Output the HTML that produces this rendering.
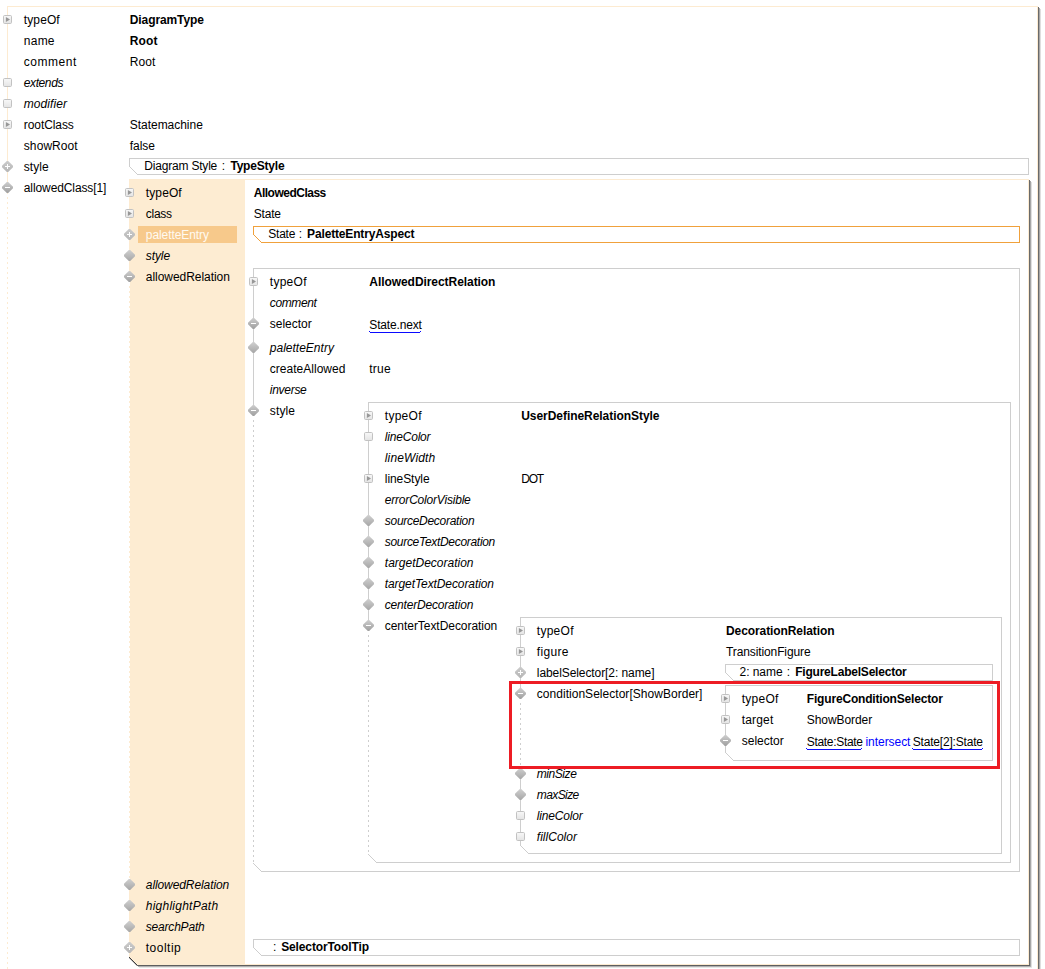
<!DOCTYPE html>
<html><head><meta charset="utf-8"><title>DiagramType Root</title>
<style>
html,body{margin:0;padding:0;background:#fff}
body{width:1045px;height:969px;position:relative;overflow:hidden;font-family:"Liberation Sans",sans-serif;font-size:12px;color:#000}
.a{position:absolute}
.t{position:absolute;white-space:pre;line-height:16px;height:16px}
.b{font-weight:bold}
.i{font-style:italic}
.g{background:#cecece}
.p{background:#fde8cb}
svg{position:absolute;overflow:visible}
.u{position:absolute;height:1px;background:#0a0aff}
</style></head><body>

<svg style="left:0;top:0" width="1045" height="969" viewBox="0 0 1045 969">
<polygon points="130,179 245,179 245,965 137.5,965 130,957.5" fill="#fdecd2"/>
</svg>
<div class="a" style="left:129px;top:179px;width:900px;height:1px;background:#fdebd1;"></div>
<div class="a" style="left:1028px;top:179px;width:1px;height:786px;background:#fdebd1;"></div>
<div class="a" style="left:1029px;top:180px;width:1px;height:787px;background:#6a6a6a;"></div>
<div class="a" style="left:1030px;top:181px;width:1px;height:786px;background:#a6a6a6;"></div>
<div class="a" style="left:1031px;top:182px;width:1px;height:785px;background:#dedede;"></div>
<div class="a" style="left:137px;top:965px;width:893px;height:1px;background:#5e5e5e;"></div>
<div class="a" style="left:138px;top:966px;width:893px;height:1px;background:#b0b0b0;"></div>
<div class="a" style="left:139px;top:967px;width:893px;height:1px;background:#e6e6e6;"></div>
<div class="a" style="left:245px;top:964px;width:784px;height:1px;background:#fdebd1;"></div>
<div class="a" style="left:7px;top:193px;width:1px;height:1px;background:#fdebd1;"></div>
<div class="a" style="left:129px;top:179px;width:1px;height:98px;background:#fdebd1;"></div>
<div class="a" style="left:129px;top:286px;width:1px;height:594px;background:repeating-linear-gradient(to bottom,#fdebd1 0,#fdebd1 2px,transparent 2px,transparent 5px)"></div>
<div class="a" style="left:129px;top:884px;width:1px;height:73px;background:#fdebd1;"></div>
<div class="a" style="left:129px;top:957px;width:1px;height:1px;background:#3c3c3c;"></div>
<div class="a" style="left:129px;top:958px;width:1px;height:1px;background:rgba(60,60,60,0.35);"></div>
<div class="a" style="left:130px;top:958px;width:1px;height:1px;background:#3c3c3c;"></div>
<div class="a" style="left:130px;top:959px;width:1px;height:1px;background:rgba(60,60,60,0.35);"></div>
<div class="a" style="left:131px;top:959px;width:1px;height:1px;background:#3c3c3c;"></div>
<div class="a" style="left:131px;top:960px;width:1px;height:1px;background:rgba(60,60,60,0.35);"></div>
<div class="a" style="left:132px;top:960px;width:1px;height:1px;background:#3c3c3c;"></div>
<div class="a" style="left:132px;top:961px;width:1px;height:1px;background:rgba(60,60,60,0.35);"></div>
<div class="a" style="left:133px;top:961px;width:1px;height:1px;background:#3c3c3c;"></div>
<div class="a" style="left:133px;top:962px;width:1px;height:1px;background:rgba(60,60,60,0.35);"></div>
<div class="a" style="left:134px;top:962px;width:1px;height:1px;background:#3c3c3c;"></div>
<div class="a" style="left:134px;top:963px;width:1px;height:1px;background:rgba(60,60,60,0.35);"></div>
<div class="a" style="left:135px;top:963px;width:1px;height:1px;background:#3c3c3c;"></div>
<div class="a" style="left:135px;top:964px;width:1px;height:1px;background:rgba(60,60,60,0.35);"></div>
<div class="a" style="left:136px;top:964px;width:1px;height:1px;background:#3c3c3c;"></div>
<div class="a" style="left:136px;top:965px;width:1px;height:1px;background:rgba(60,60,60,0.35);"></div>
<div class="a" style="left:7px;top:6px;width:1031px;height:1px;background:#fdebd1;"></div>
<div class="a" style="left:7px;top:6px;width:1px;height:182px;background:#fdebd1;"></div>
<div class="a" style="left:7px;top:197px;width:1px;height:773px;background:repeating-linear-gradient(to bottom,#fdebd1 0,#fdebd1 2px,transparent 2px,transparent 5px)"></div>
<div class="a" style="left:1037px;top:6px;width:1px;height:963px;background:#fdebd1;"></div>
<div class="a" style="left:1038px;top:7px;width:1px;height:962px;background:#6a6a6a;"></div>
<div class="a" style="left:1039px;top:8px;width:1px;height:961px;background:#a6a6a6;"></div>
<div class="a" style="left:1040px;top:9px;width:1px;height:960px;background:#dedede;"></div>
<div class="a" style="left:138px;top:226px;width:99px;height:17px;background:#f7c98b;"></div>
<div class="a" style="left:253px;top:268px;width:767px;height:1px;background:#cecece;"></div>
<div class="a" style="left:1019px;top:268px;width:1px;height:604px;background:#cecece;"></div>
<div class="a" style="left:261px;top:871px;width:759px;height:1px;background:#cecece;"></div>
<div class="a" style="left:253px;top:268px;width:1px;height:143px;background:#cecece;"></div>
<div class="a" style="left:253px;top:420px;width:1px;height:443px;background:repeating-linear-gradient(to bottom,#cecece 0,#cecece 2px,transparent 2px,transparent 5px)"></div>
<div class="a" style="left:253px;top:863px;width:1px;height:1px;background:#cecece;"></div>
<div class="a" style="left:254px;top:864px;width:1px;height:1px;background:#cecece;"></div>
<div class="a" style="left:255px;top:865px;width:1px;height:1px;background:#cecece;"></div>
<div class="a" style="left:256px;top:866px;width:1px;height:1px;background:#cecece;"></div>
<div class="a" style="left:257px;top:867px;width:1px;height:1px;background:#cecece;"></div>
<div class="a" style="left:258px;top:868px;width:1px;height:1px;background:#cecece;"></div>
<div class="a" style="left:259px;top:869px;width:1px;height:1px;background:#cecece;"></div>
<div class="a" style="left:260px;top:870px;width:1px;height:1px;background:#cecece;"></div>
<div class="a" style="left:368px;top:402px;width:643px;height:1px;background:#cecece;"></div>
<div class="a" style="left:1010px;top:402px;width:1px;height:461px;background:#cecece;"></div>
<div class="a" style="left:376px;top:862px;width:635px;height:1px;background:#cecece;"></div>
<div class="a" style="left:368px;top:402px;width:1px;height:224px;background:#cecece;"></div>
<div class="a" style="left:368px;top:635px;width:1px;height:219px;background:repeating-linear-gradient(to bottom,#cecece 0,#cecece 2px,transparent 2px,transparent 5px)"></div>
<div class="a" style="left:368px;top:854px;width:1px;height:1px;background:#cecece;"></div>
<div class="a" style="left:369px;top:855px;width:1px;height:1px;background:#cecece;"></div>
<div class="a" style="left:370px;top:856px;width:1px;height:1px;background:#cecece;"></div>
<div class="a" style="left:371px;top:857px;width:1px;height:1px;background:#cecece;"></div>
<div class="a" style="left:372px;top:858px;width:1px;height:1px;background:#cecece;"></div>
<div class="a" style="left:373px;top:859px;width:1px;height:1px;background:#cecece;"></div>
<div class="a" style="left:374px;top:860px;width:1px;height:1px;background:#cecece;"></div>
<div class="a" style="left:375px;top:861px;width:1px;height:1px;background:#cecece;"></div>
<div class="a" style="left:520px;top:617px;width:482px;height:1px;background:#cecece;"></div>
<div class="a" style="left:1001px;top:617px;width:1px;height:237px;background:#cecece;"></div>
<div class="a" style="left:528px;top:853px;width:474px;height:1px;background:#cecece;"></div>
<div class="a" style="left:520px;top:617px;width:1px;height:77px;background:#cecece;"></div>
<div class="a" style="left:520px;top:703px;width:1px;height:65px;background:repeating-linear-gradient(to bottom,#cecece 0,#cecece 2px,transparent 2px,transparent 5px)"></div>
<div class="a" style="left:520px;top:773px;width:1px;height:72px;background:#cecece;"></div>
<div class="a" style="left:520px;top:845px;width:1px;height:1px;background:#cecece;"></div>
<div class="a" style="left:521px;top:846px;width:1px;height:1px;background:#cecece;"></div>
<div class="a" style="left:522px;top:847px;width:1px;height:1px;background:#cecece;"></div>
<div class="a" style="left:523px;top:848px;width:1px;height:1px;background:#cecece;"></div>
<div class="a" style="left:524px;top:849px;width:1px;height:1px;background:#cecece;"></div>
<div class="a" style="left:525px;top:850px;width:1px;height:1px;background:#cecece;"></div>
<div class="a" style="left:526px;top:851px;width:1px;height:1px;background:#cecece;"></div>
<div class="a" style="left:527px;top:852px;width:1px;height:1px;background:#cecece;"></div>
<div class="a" style="left:725px;top:685px;width:268px;height:1px;background:#cecece;"></div>
<div class="a" style="left:992px;top:685px;width:1px;height:76px;background:#cecece;"></div>
<div class="a" style="left:733px;top:760px;width:260px;height:1px;background:#cecece;"></div>
<div class="a" style="left:725px;top:685px;width:1px;height:67px;background:#cecece;"></div>
<div class="a" style="left:725px;top:752px;width:1px;height:1px;background:#cecece;"></div>
<div class="a" style="left:726px;top:753px;width:1px;height:1px;background:#cecece;"></div>
<div class="a" style="left:727px;top:754px;width:1px;height:1px;background:#cecece;"></div>
<div class="a" style="left:728px;top:755px;width:1px;height:1px;background:#cecece;"></div>
<div class="a" style="left:729px;top:756px;width:1px;height:1px;background:#cecece;"></div>
<div class="a" style="left:730px;top:757px;width:1px;height:1px;background:#cecece;"></div>
<div class="a" style="left:731px;top:758px;width:1px;height:1px;background:#cecece;"></div>
<div class="a" style="left:732px;top:759px;width:1px;height:1px;background:#cecece;"></div>
<div class="a" style="left:129px;top:158px;width:900px;height:1px;background:#cecece;"></div>
<div class="a" style="left:1028px;top:158px;width:1px;height:17px;background:#cecece;"></div>
<div class="a" style="left:137px;top:174px;width:892px;height:1px;background:#cecece;"></div>
<div class="a" style="left:129px;top:158px;width:1px;height:9px;background:#cecece;"></div>
<div class="a" style="left:129px;top:166px;width:1px;height:1px;background:#cecece;"></div>
<div class="a" style="left:130px;top:167px;width:1px;height:1px;background:#cecece;"></div>
<div class="a" style="left:131px;top:168px;width:1px;height:1px;background:#cecece;"></div>
<div class="a" style="left:132px;top:169px;width:1px;height:1px;background:#cecece;"></div>
<div class="a" style="left:133px;top:170px;width:1px;height:1px;background:#cecece;"></div>
<div class="a" style="left:134px;top:171px;width:1px;height:1px;background:#cecece;"></div>
<div class="a" style="left:135px;top:172px;width:1px;height:1px;background:#cecece;"></div>
<div class="a" style="left:136px;top:173px;width:1px;height:1px;background:#cecece;"></div>
<div class="a" style="left:253px;top:226px;width:767px;height:1px;background:#f0a13c;"></div>
<div class="a" style="left:1019px;top:226px;width:1px;height:17px;background:#f0a13c;"></div>
<div class="a" style="left:261px;top:242px;width:759px;height:1px;background:#f0a13c;"></div>
<div class="a" style="left:253px;top:226px;width:1px;height:9px;background:#f0a13c;"></div>
<div class="a" style="left:253px;top:234px;width:1px;height:1px;background:#f0a13c;"></div>
<div class="a" style="left:254px;top:235px;width:1px;height:1px;background:#f0a13c;"></div>
<div class="a" style="left:255px;top:236px;width:1px;height:1px;background:#f0a13c;"></div>
<div class="a" style="left:256px;top:237px;width:1px;height:1px;background:#f0a13c;"></div>
<div class="a" style="left:257px;top:238px;width:1px;height:1px;background:#f0a13c;"></div>
<div class="a" style="left:258px;top:239px;width:1px;height:1px;background:#f0a13c;"></div>
<div class="a" style="left:259px;top:240px;width:1px;height:1px;background:#f0a13c;"></div>
<div class="a" style="left:260px;top:241px;width:1px;height:1px;background:#f0a13c;"></div>
<div class="a" style="left:253px;top:939px;width:767px;height:1px;background:#cecece;"></div>
<div class="a" style="left:1019px;top:939px;width:1px;height:17px;background:#cecece;"></div>
<div class="a" style="left:261px;top:955px;width:759px;height:1px;background:#cecece;"></div>
<div class="a" style="left:253px;top:939px;width:1px;height:9px;background:#cecece;"></div>
<div class="a" style="left:253px;top:947px;width:1px;height:1px;background:#cecece;"></div>
<div class="a" style="left:254px;top:948px;width:1px;height:1px;background:#cecece;"></div>
<div class="a" style="left:255px;top:949px;width:1px;height:1px;background:#cecece;"></div>
<div class="a" style="left:256px;top:950px;width:1px;height:1px;background:#cecece;"></div>
<div class="a" style="left:257px;top:951px;width:1px;height:1px;background:#cecece;"></div>
<div class="a" style="left:258px;top:952px;width:1px;height:1px;background:#cecece;"></div>
<div class="a" style="left:259px;top:953px;width:1px;height:1px;background:#cecece;"></div>
<div class="a" style="left:260px;top:954px;width:1px;height:1px;background:#cecece;"></div>
<div class="a" style="left:725px;top:664px;width:268px;height:1px;background:#cecece;"></div>
<div class="a" style="left:992px;top:664px;width:1px;height:17px;background:#cecece;"></div>
<div class="a" style="left:733px;top:680px;width:260px;height:1px;background:#cecece;"></div>
<div class="a" style="left:725px;top:664px;width:1px;height:9px;background:#cecece;"></div>
<div class="a" style="left:725px;top:672px;width:1px;height:1px;background:#cecece;"></div>
<div class="a" style="left:726px;top:673px;width:1px;height:1px;background:#cecece;"></div>
<div class="a" style="left:727px;top:674px;width:1px;height:1px;background:#cecece;"></div>
<div class="a" style="left:728px;top:675px;width:1px;height:1px;background:#cecece;"></div>
<div class="a" style="left:729px;top:676px;width:1px;height:1px;background:#cecece;"></div>
<div class="a" style="left:730px;top:677px;width:1px;height:1px;background:#cecece;"></div>
<div class="a" style="left:731px;top:678px;width:1px;height:1px;background:#cecece;"></div>
<div class="a" style="left:732px;top:679px;width:1px;height:1px;background:#cecece;"></div>
<svg style="left:3px;top:15px" width="9" height="9" viewBox="0 0 9 9"><defs><linearGradient id="gb7_19" x1="0" y1="0" x2="0" y2="1"><stop offset="0" stop-color="#f8f8f8"/><stop offset="1" stop-color="#e4e4e4"/></linearGradient></defs><rect x="0.5" y="0.5" width="8" height="8" rx="1.1" ry="1.1" fill="url(#gb7_19)" stroke="#c2c2c2"/><path d="M2.9 1.9 L2.9 7.1 L7 4.5 Z" fill="#979797"/></svg>
<svg style="left:3px;top:78px" width="9" height="9" viewBox="0 0 9 9"><defs><linearGradient id="gb7_82" x1="0" y1="0" x2="0" y2="1"><stop offset="0" stop-color="#f8f8f8"/><stop offset="1" stop-color="#e4e4e4"/></linearGradient></defs><rect x="0.5" y="0.5" width="8" height="8" rx="1.1" ry="1.1" fill="url(#gb7_82)" stroke="#c2c2c2"/></svg>
<svg style="left:3px;top:99px" width="9" height="9" viewBox="0 0 9 9"><defs><linearGradient id="gb7_103" x1="0" y1="0" x2="0" y2="1"><stop offset="0" stop-color="#f8f8f8"/><stop offset="1" stop-color="#e4e4e4"/></linearGradient></defs><rect x="0.5" y="0.5" width="8" height="8" rx="1.1" ry="1.1" fill="url(#gb7_103)" stroke="#c2c2c2"/></svg>
<svg style="left:3px;top:120px" width="9" height="9" viewBox="0 0 9 9"><defs><linearGradient id="gb7_124" x1="0" y1="0" x2="0" y2="1"><stop offset="0" stop-color="#f8f8f8"/><stop offset="1" stop-color="#e4e4e4"/></linearGradient></defs><rect x="0.5" y="0.5" width="8" height="8" rx="1.1" ry="1.1" fill="url(#gb7_124)" stroke="#c2c2c2"/><path d="M2.9 1.9 L2.9 7.1 L7 4.5 Z" fill="#979797"/></svg>
<svg style="left:2px;top:161px;overflow:hidden" width="11" height="11" viewBox="0 0 11 11"><defs><linearGradient id="gd7_166" x1="0" y1="0" x2="0" y2="1"><stop offset="0" stop-color="#cdcdcd"/><stop offset="1" stop-color="#b4b4b4"/></linearGradient></defs><path d="M5.5 -0.7 L11.7 5.5 L5.5 11.7 L-0.7 5.5 Z" fill="url(#gd7_166)"/><rect x="3" y="5" width="5" height="1" fill="#fff"/><rect x="5" y="3" width="1" height="5" fill="#fff"/></svg>
<svg style="left:2px;top:182px;overflow:hidden" width="11" height="11" viewBox="0 0 11 11"><defs><linearGradient id="gd7_187" x1="0" y1="0" x2="0" y2="1"><stop offset="0" stop-color="#d0d0d0"/><stop offset="1" stop-color="#9c9c9c"/></linearGradient></defs><path d="M5.5 -0.7 L11.7 5.5 L5.5 11.7 L-0.7 5.5 Z" fill="url(#gd7_187)"/><rect x="3" y="5" width="5" height="1" fill="#fff"/></svg>
<svg style="left:125px;top:188px" width="9" height="9" viewBox="0 0 9 9"><defs><linearGradient id="gb129_192" x1="0" y1="0" x2="0" y2="1"><stop offset="0" stop-color="#f8f8f8"/><stop offset="1" stop-color="#e4e4e4"/></linearGradient></defs><rect x="0.5" y="0.5" width="8" height="8" rx="1.1" ry="1.1" fill="url(#gb129_192)" stroke="#c2c2c2"/><path d="M2.9 1.9 L2.9 7.1 L7 4.5 Z" fill="#979797"/></svg>
<svg style="left:125px;top:209px" width="9" height="9" viewBox="0 0 9 9"><defs><linearGradient id="gb129_213" x1="0" y1="0" x2="0" y2="1"><stop offset="0" stop-color="#f8f8f8"/><stop offset="1" stop-color="#e4e4e4"/></linearGradient></defs><rect x="0.5" y="0.5" width="8" height="8" rx="1.1" ry="1.1" fill="url(#gb129_213)" stroke="#c2c2c2"/><path d="M2.9 1.9 L2.9 7.1 L7 4.5 Z" fill="#979797"/></svg>
<svg style="left:124px;top:229px;overflow:hidden" width="11" height="11" viewBox="0 0 11 11"><defs><linearGradient id="gd129_234" x1="0" y1="0" x2="0" y2="1"><stop offset="0" stop-color="#cdcdcd"/><stop offset="1" stop-color="#b4b4b4"/></linearGradient></defs><path d="M5.5 -0.7 L11.7 5.5 L5.5 11.7 L-0.7 5.5 Z" fill="url(#gd129_234)"/><rect x="3" y="5" width="5" height="1" fill="#fff"/><rect x="5" y="3" width="1" height="5" fill="#fff"/></svg>
<svg style="left:124px;top:250px;overflow:hidden" width="11" height="11" viewBox="0 0 11 11"><defs><linearGradient id="gd129_255" x1="0" y1="0" x2="0" y2="1"><stop offset="0" stop-color="#d2d2d2"/><stop offset="1" stop-color="#a4a4a4"/></linearGradient></defs><path d="M5.5 -0.7 L11.7 5.5 L5.5 11.7 L-0.7 5.5 Z" fill="url(#gd129_255)"/></svg>
<svg style="left:124px;top:271px;overflow:hidden" width="11" height="11" viewBox="0 0 11 11"><defs><linearGradient id="gd129_276" x1="0" y1="0" x2="0" y2="1"><stop offset="0" stop-color="#d0d0d0"/><stop offset="1" stop-color="#9c9c9c"/></linearGradient></defs><path d="M5.5 -0.7 L11.7 5.5 L5.5 11.7 L-0.7 5.5 Z" fill="url(#gd129_276)"/><rect x="3" y="5" width="5" height="1" fill="#fff"/></svg>
<svg style="left:124px;top:879px;overflow:hidden" width="11" height="11" viewBox="0 0 11 11"><defs><linearGradient id="gd129_884" x1="0" y1="0" x2="0" y2="1"><stop offset="0" stop-color="#d2d2d2"/><stop offset="1" stop-color="#a4a4a4"/></linearGradient></defs><path d="M5.5 -0.7 L11.7 5.5 L5.5 11.7 L-0.7 5.5 Z" fill="url(#gd129_884)"/></svg>
<svg style="left:124px;top:900px;overflow:hidden" width="11" height="11" viewBox="0 0 11 11"><defs><linearGradient id="gd129_905" x1="0" y1="0" x2="0" y2="1"><stop offset="0" stop-color="#d2d2d2"/><stop offset="1" stop-color="#a4a4a4"/></linearGradient></defs><path d="M5.5 -0.7 L11.7 5.5 L5.5 11.7 L-0.7 5.5 Z" fill="url(#gd129_905)"/></svg>
<svg style="left:124px;top:921px;overflow:hidden" width="11" height="11" viewBox="0 0 11 11"><defs><linearGradient id="gd129_926" x1="0" y1="0" x2="0" y2="1"><stop offset="0" stop-color="#d2d2d2"/><stop offset="1" stop-color="#a4a4a4"/></linearGradient></defs><path d="M5.5 -0.7 L11.7 5.5 L5.5 11.7 L-0.7 5.5 Z" fill="url(#gd129_926)"/></svg>
<svg style="left:124px;top:942px;overflow:hidden" width="11" height="11" viewBox="0 0 11 11"><defs><linearGradient id="gd129_947" x1="0" y1="0" x2="0" y2="1"><stop offset="0" stop-color="#cdcdcd"/><stop offset="1" stop-color="#b4b4b4"/></linearGradient></defs><path d="M5.5 -0.7 L11.7 5.5 L5.5 11.7 L-0.7 5.5 Z" fill="url(#gd129_947)"/><rect x="3" y="5" width="5" height="1" fill="#fff"/><rect x="5" y="3" width="1" height="5" fill="#fff"/></svg>
<svg style="left:249px;top:277px" width="9" height="9" viewBox="0 0 9 9"><defs><linearGradient id="gb253_281" x1="0" y1="0" x2="0" y2="1"><stop offset="0" stop-color="#f8f8f8"/><stop offset="1" stop-color="#e4e4e4"/></linearGradient></defs><rect x="0.5" y="0.5" width="8" height="8" rx="1.1" ry="1.1" fill="url(#gb253_281)" stroke="#c2c2c2"/><path d="M2.9 1.9 L2.9 7.1 L7 4.5 Z" fill="#979797"/></svg>
<svg style="left:248px;top:318px;overflow:hidden" width="11" height="11" viewBox="0 0 11 11"><defs><linearGradient id="gd253_323" x1="0" y1="0" x2="0" y2="1"><stop offset="0" stop-color="#d0d0d0"/><stop offset="1" stop-color="#9c9c9c"/></linearGradient></defs><path d="M5.5 -0.7 L11.7 5.5 L5.5 11.7 L-0.7 5.5 Z" fill="url(#gd253_323)"/><rect x="3" y="5" width="5" height="1" fill="#fff"/></svg>
<svg style="left:248px;top:342px;overflow:hidden" width="11" height="11" viewBox="0 0 11 11"><defs><linearGradient id="gd253_347" x1="0" y1="0" x2="0" y2="1"><stop offset="0" stop-color="#d2d2d2"/><stop offset="1" stop-color="#a4a4a4"/></linearGradient></defs><path d="M5.5 -0.7 L11.7 5.5 L5.5 11.7 L-0.7 5.5 Z" fill="url(#gd253_347)"/></svg>
<svg style="left:248px;top:405px;overflow:hidden" width="11" height="11" viewBox="0 0 11 11"><defs><linearGradient id="gd253_410" x1="0" y1="0" x2="0" y2="1"><stop offset="0" stop-color="#d0d0d0"/><stop offset="1" stop-color="#9c9c9c"/></linearGradient></defs><path d="M5.5 -0.7 L11.7 5.5 L5.5 11.7 L-0.7 5.5 Z" fill="url(#gd253_410)"/><rect x="3" y="5" width="5" height="1" fill="#fff"/></svg>
<svg style="left:364px;top:411px" width="9" height="9" viewBox="0 0 9 9"><defs><linearGradient id="gb368_415" x1="0" y1="0" x2="0" y2="1"><stop offset="0" stop-color="#f8f8f8"/><stop offset="1" stop-color="#e4e4e4"/></linearGradient></defs><rect x="0.5" y="0.5" width="8" height="8" rx="1.1" ry="1.1" fill="url(#gb368_415)" stroke="#c2c2c2"/><path d="M2.9 1.9 L2.9 7.1 L7 4.5 Z" fill="#979797"/></svg>
<svg style="left:364px;top:432px" width="9" height="9" viewBox="0 0 9 9"><defs><linearGradient id="gb368_436" x1="0" y1="0" x2="0" y2="1"><stop offset="0" stop-color="#f8f8f8"/><stop offset="1" stop-color="#e4e4e4"/></linearGradient></defs><rect x="0.5" y="0.5" width="8" height="8" rx="1.1" ry="1.1" fill="url(#gb368_436)" stroke="#c2c2c2"/></svg>
<svg style="left:364px;top:474px" width="9" height="9" viewBox="0 0 9 9"><defs><linearGradient id="gb368_478" x1="0" y1="0" x2="0" y2="1"><stop offset="0" stop-color="#f8f8f8"/><stop offset="1" stop-color="#e4e4e4"/></linearGradient></defs><rect x="0.5" y="0.5" width="8" height="8" rx="1.1" ry="1.1" fill="url(#gb368_478)" stroke="#c2c2c2"/><path d="M2.9 1.9 L2.9 7.1 L7 4.5 Z" fill="#979797"/></svg>
<svg style="left:363px;top:515px;overflow:hidden" width="11" height="11" viewBox="0 0 11 11"><defs><linearGradient id="gd368_520" x1="0" y1="0" x2="0" y2="1"><stop offset="0" stop-color="#d2d2d2"/><stop offset="1" stop-color="#a4a4a4"/></linearGradient></defs><path d="M5.5 -0.7 L11.7 5.5 L5.5 11.7 L-0.7 5.5 Z" fill="url(#gd368_520)"/></svg>
<svg style="left:363px;top:536px;overflow:hidden" width="11" height="11" viewBox="0 0 11 11"><defs><linearGradient id="gd368_541" x1="0" y1="0" x2="0" y2="1"><stop offset="0" stop-color="#d2d2d2"/><stop offset="1" stop-color="#a4a4a4"/></linearGradient></defs><path d="M5.5 -0.7 L11.7 5.5 L5.5 11.7 L-0.7 5.5 Z" fill="url(#gd368_541)"/></svg>
<svg style="left:363px;top:557px;overflow:hidden" width="11" height="11" viewBox="0 0 11 11"><defs><linearGradient id="gd368_562" x1="0" y1="0" x2="0" y2="1"><stop offset="0" stop-color="#d2d2d2"/><stop offset="1" stop-color="#a4a4a4"/></linearGradient></defs><path d="M5.5 -0.7 L11.7 5.5 L5.5 11.7 L-0.7 5.5 Z" fill="url(#gd368_562)"/></svg>
<svg style="left:363px;top:578px;overflow:hidden" width="11" height="11" viewBox="0 0 11 11"><defs><linearGradient id="gd368_583" x1="0" y1="0" x2="0" y2="1"><stop offset="0" stop-color="#d2d2d2"/><stop offset="1" stop-color="#a4a4a4"/></linearGradient></defs><path d="M5.5 -0.7 L11.7 5.5 L5.5 11.7 L-0.7 5.5 Z" fill="url(#gd368_583)"/></svg>
<svg style="left:363px;top:599px;overflow:hidden" width="11" height="11" viewBox="0 0 11 11"><defs><linearGradient id="gd368_604" x1="0" y1="0" x2="0" y2="1"><stop offset="0" stop-color="#d2d2d2"/><stop offset="1" stop-color="#a4a4a4"/></linearGradient></defs><path d="M5.5 -0.7 L11.7 5.5 L5.5 11.7 L-0.7 5.5 Z" fill="url(#gd368_604)"/></svg>
<svg style="left:363px;top:620px;overflow:hidden" width="11" height="11" viewBox="0 0 11 11"><defs><linearGradient id="gd368_625" x1="0" y1="0" x2="0" y2="1"><stop offset="0" stop-color="#d0d0d0"/><stop offset="1" stop-color="#9c9c9c"/></linearGradient></defs><path d="M5.5 -0.7 L11.7 5.5 L5.5 11.7 L-0.7 5.5 Z" fill="url(#gd368_625)"/><rect x="3" y="5" width="5" height="1" fill="#fff"/></svg>
<svg style="left:516px;top:626px" width="9" height="9" viewBox="0 0 9 9"><defs><linearGradient id="gb520_630" x1="0" y1="0" x2="0" y2="1"><stop offset="0" stop-color="#f8f8f8"/><stop offset="1" stop-color="#e4e4e4"/></linearGradient></defs><rect x="0.5" y="0.5" width="8" height="8" rx="1.1" ry="1.1" fill="url(#gb520_630)" stroke="#c2c2c2"/><path d="M2.9 1.9 L2.9 7.1 L7 4.5 Z" fill="#979797"/></svg>
<svg style="left:516px;top:647px" width="9" height="9" viewBox="0 0 9 9"><defs><linearGradient id="gb520_651" x1="0" y1="0" x2="0" y2="1"><stop offset="0" stop-color="#f8f8f8"/><stop offset="1" stop-color="#e4e4e4"/></linearGradient></defs><rect x="0.5" y="0.5" width="8" height="8" rx="1.1" ry="1.1" fill="url(#gb520_651)" stroke="#c2c2c2"/><path d="M2.9 1.9 L2.9 7.1 L7 4.5 Z" fill="#979797"/></svg>
<svg style="left:515px;top:667px;overflow:hidden" width="11" height="11" viewBox="0 0 11 11"><defs><linearGradient id="gd520_672" x1="0" y1="0" x2="0" y2="1"><stop offset="0" stop-color="#cdcdcd"/><stop offset="1" stop-color="#b4b4b4"/></linearGradient></defs><path d="M5.5 -0.7 L11.7 5.5 L5.5 11.7 L-0.7 5.5 Z" fill="url(#gd520_672)"/><rect x="3" y="5" width="5" height="1" fill="#fff"/><rect x="5" y="3" width="1" height="5" fill="#fff"/></svg>
<svg style="left:515px;top:688px;overflow:hidden" width="11" height="11" viewBox="0 0 11 11"><defs><linearGradient id="gd520_693" x1="0" y1="0" x2="0" y2="1"><stop offset="0" stop-color="#d0d0d0"/><stop offset="1" stop-color="#9c9c9c"/></linearGradient></defs><path d="M5.5 -0.7 L11.7 5.5 L5.5 11.7 L-0.7 5.5 Z" fill="url(#gd520_693)"/><rect x="3" y="5" width="5" height="1" fill="#fff"/></svg>
<svg style="left:515px;top:768px;overflow:hidden" width="11" height="11" viewBox="0 0 11 11"><defs><linearGradient id="gd520_773" x1="0" y1="0" x2="0" y2="1"><stop offset="0" stop-color="#d2d2d2"/><stop offset="1" stop-color="#a4a4a4"/></linearGradient></defs><path d="M5.5 -0.7 L11.7 5.5 L5.5 11.7 L-0.7 5.5 Z" fill="url(#gd520_773)"/></svg>
<svg style="left:515px;top:789px;overflow:hidden" width="11" height="11" viewBox="0 0 11 11"><defs><linearGradient id="gd520_794" x1="0" y1="0" x2="0" y2="1"><stop offset="0" stop-color="#d2d2d2"/><stop offset="1" stop-color="#a4a4a4"/></linearGradient></defs><path d="M5.5 -0.7 L11.7 5.5 L5.5 11.7 L-0.7 5.5 Z" fill="url(#gd520_794)"/></svg>
<svg style="left:516px;top:811px" width="9" height="9" viewBox="0 0 9 9"><defs><linearGradient id="gb520_815" x1="0" y1="0" x2="0" y2="1"><stop offset="0" stop-color="#f8f8f8"/><stop offset="1" stop-color="#e4e4e4"/></linearGradient></defs><rect x="0.5" y="0.5" width="8" height="8" rx="1.1" ry="1.1" fill="url(#gb520_815)" stroke="#c2c2c2"/></svg>
<svg style="left:516px;top:832px" width="9" height="9" viewBox="0 0 9 9"><defs><linearGradient id="gb520_836" x1="0" y1="0" x2="0" y2="1"><stop offset="0" stop-color="#f8f8f8"/><stop offset="1" stop-color="#e4e4e4"/></linearGradient></defs><rect x="0.5" y="0.5" width="8" height="8" rx="1.1" ry="1.1" fill="url(#gb520_836)" stroke="#c2c2c2"/></svg>
<svg style="left:721px;top:694px" width="9" height="9" viewBox="0 0 9 9"><defs><linearGradient id="gb725_698" x1="0" y1="0" x2="0" y2="1"><stop offset="0" stop-color="#f8f8f8"/><stop offset="1" stop-color="#e4e4e4"/></linearGradient></defs><rect x="0.5" y="0.5" width="8" height="8" rx="1.1" ry="1.1" fill="url(#gb725_698)" stroke="#c2c2c2"/><path d="M2.9 1.9 L2.9 7.1 L7 4.5 Z" fill="#979797"/></svg>
<svg style="left:721px;top:715px" width="9" height="9" viewBox="0 0 9 9"><defs><linearGradient id="gb725_719" x1="0" y1="0" x2="0" y2="1"><stop offset="0" stop-color="#f8f8f8"/><stop offset="1" stop-color="#e4e4e4"/></linearGradient></defs><rect x="0.5" y="0.5" width="8" height="8" rx="1.1" ry="1.1" fill="url(#gb725_719)" stroke="#c2c2c2"/><path d="M2.9 1.9 L2.9 7.1 L7 4.5 Z" fill="#979797"/></svg>
<svg style="left:720px;top:735px;overflow:hidden" width="11" height="11" viewBox="0 0 11 11"><defs><linearGradient id="gd725_740" x1="0" y1="0" x2="0" y2="1"><stop offset="0" stop-color="#d0d0d0"/><stop offset="1" stop-color="#9c9c9c"/></linearGradient></defs><path d="M5.5 -0.7 L11.7 5.5 L5.5 11.7 L-0.7 5.5 Z" fill="url(#gd725_740)"/><rect x="3" y="5" width="5" height="1" fill="#fff"/></svg>
<span class="t" style="left:23.8px;top:12px;letter-spacing:0.107px;">typeOf</span>
<span class="t b" style="left:129.8px;top:12px;letter-spacing:-0.104px;">DiagramType</span>
<span class="t" style="left:23.8px;top:33px;letter-spacing:0.242px;">name</span>
<span class="t b" style="left:129.8px;top:33px;letter-spacing:0.093px;">Root</span>
<span class="t" style="left:23.8px;top:54px;letter-spacing:0.520px;">comment</span>
<span class="t" style="left:129.8px;top:54px;letter-spacing:0.085px;">Root</span>
<span class="t i" style="left:23.8px;top:75px;letter-spacing:-0.404px;">extends</span>
<span class="t i" style="left:23.8px;top:96px;letter-spacing:0.064px;">modifier</span>
<span class="t" style="left:23.8px;top:117px;letter-spacing:-0.076px;">rootClass</span>
<span class="t" style="left:129.8px;top:117px;letter-spacing:-0.033px;">Statemachine</span>
<span class="t" style="left:23.8px;top:138px;letter-spacing:0.078px;">showRoot</span>
<span class="t" style="left:129.8px;top:138px;letter-spacing:-0.072px;">false</span>
<span class="t" style="left:23.8px;top:159px;letter-spacing:0.062px;">style</span>
<span class="t" style="left:144.3px;top:158px;letter-spacing:-0.197px;">Diagram Style</span>
<span class="t" style="left:221.7px;top:158px;">:</span>
<span class="t b" style="left:230.4px;top:158px;letter-spacing:-0.201px;">TypeStyle</span>
<span class="t" style="left:23.8px;top:180px;letter-spacing:-0.103px;">allowedClass[1]</span>
<span class="t" style="left:145.8px;top:185px;letter-spacing:0.107px;">typeOf</span>
<span class="t b" style="left:253.8px;top:185px;letter-spacing:-0.503px;">AllowedClass</span>
<span class="t" style="left:145.8px;top:206px;letter-spacing:-0.269px;">class</span>
<span class="t" style="left:253.8px;top:206px;letter-spacing:-0.206px;">State</span>
<span class="t" style="left:145.8px;top:227px;letter-spacing:-0.087px;color:#fffaf1;">paletteEntry</span>
<span class="t" style="left:268.3px;top:226px;letter-spacing:-0.246px;">State</span>
<span class="t" style="left:298.7px;top:226px;">:</span>
<span class="t b" style="left:307.1px;top:226px;letter-spacing:-0.158px;">PaletteEntryAspect</span>
<span class="t i" style="left:145.8px;top:248px;letter-spacing:-0.098px;">style</span>
<span class="t" style="left:145.8px;top:269px;letter-spacing:-0.049px;">allowedRelation</span>
<span class="t i" style="left:145.8px;top:877px;letter-spacing:-0.089px;">allowedRelation</span>
<span class="t i" style="left:145.8px;top:898px;letter-spacing:0.239px;">highlightPath</span>
<span class="t i" style="left:145.8px;top:919px;letter-spacing:-0.200px;">searchPath</span>
<span class="t" style="left:145.8px;top:940px;letter-spacing:0.481px;">tooltip</span>
<span class="t" style="left:273.1px;top:939px;">:</span>
<span class="t b" style="left:281.2px;top:939px;letter-spacing:-0.125px;">SelectorToolTip</span>
<span class="t" style="left:269.8px;top:274px;letter-spacing:0.273px;">typeOf</span>
<span class="t b" style="left:369.3px;top:274px;letter-spacing:-0.060px;">AllowedDirectRelation</span>
<span class="t i" style="left:269.8px;top:295px;letter-spacing:-0.366px;">comment</span>
<span class="t" style="left:269.8px;top:316px;letter-spacing:-0.004px;">selector</span>
<span class="t" style="left:369.3px;top:317px;letter-spacing:-0.155px;">State.next</span>
<div class="u" style="left:370px;top:332px;width:50px"></div>
<div class="u" style="left:369px;top:331px;width:1px"></div>
<div class="u" style="left:420px;top:331px;width:1px"></div>
<span class="t i" style="left:269.8px;top:340px;letter-spacing:0.004px;">paletteEntry</span>
<span class="t" style="left:269.8px;top:361px;letter-spacing:0.017px;">createAllowed</span>
<span class="t" style="left:369.3px;top:361px;letter-spacing:0.228px;">true</span>
<span class="t i" style="left:269.8px;top:382px;letter-spacing:-0.284px;">inverse</span>
<span class="t" style="left:269.8px;top:403px;letter-spacing:0.123px;">style</span>
<span class="t" style="left:384.8px;top:408px;letter-spacing:0.273px;">typeOf</span>
<span class="t b" style="left:521.2px;top:408px;letter-spacing:-0.047px;">UserDefineRelationStyle</span>
<span class="t i" style="left:384.8px;top:429px;letter-spacing:-0.195px;">lineColor</span>
<span class="t i" style="left:384.8px;top:450px;letter-spacing:0.139px;">lineWidth</span>
<span class="t" style="left:384.8px;top:471px;letter-spacing:-0.073px;">lineStyle</span>
<span class="t" style="left:521.2px;top:471px;letter-spacing:-1.181px;">DOT</span>
<span class="t i" style="left:384.8px;top:492px;letter-spacing:-0.197px;">errorColorVisible</span>
<span class="t i" style="left:384.8px;top:513px;letter-spacing:-0.285px;">sourceDecoration</span>
<span class="t i" style="left:384.8px;top:534px;letter-spacing:-0.305px;">sourceTextDecoration</span>
<span class="t i" style="left:384.8px;top:555px;letter-spacing:-0.001px;">targetDecoration</span>
<span class="t i" style="left:384.8px;top:576px;letter-spacing:-0.093px;">targetTextDecoration</span>
<span class="t i" style="left:384.8px;top:597px;letter-spacing:-0.187px;">centerDecoration</span>
<span class="t" style="left:384.8px;top:618px;letter-spacing:-0.050px;">centerTextDecoration</span>
<span class="t" style="left:536.8px;top:623px;letter-spacing:0.273px;">typeOf</span>
<span class="t b" style="left:726.0px;top:623px;letter-spacing:-0.090px;">DecorationRelation</span>
<span class="t" style="left:536.8px;top:644px;letter-spacing:0.311px;">figure</span>
<span class="t" style="left:726.0px;top:644px;letter-spacing:-0.110px;">TransitionFigure</span>
<span class="t" style="left:536.8px;top:665px;letter-spacing:-0.082px;">labelSelector[2: name]</span>
<span class="t" style="left:739.6px;top:664px;letter-spacing:-0.066px;">2: name</span>
<span class="t" style="left:786.7px;top:664px;">:</span>
<span class="t b" style="left:795.2px;top:664px;letter-spacing:-0.214px;">FigureLabelSelector</span>
<span class="t" style="left:536.8px;top:686px;letter-spacing:0.032px;">conditionSelector[ShowBorder]</span>
<span class="t i" style="left:536.8px;top:766px;letter-spacing:-0.441px;">minSize</span>
<span class="t i" style="left:536.8px;top:787px;letter-spacing:-0.602px;">maxSize</span>
<span class="t i" style="left:536.8px;top:808px;letter-spacing:-0.173px;">lineColor</span>
<span class="t i" style="left:536.8px;top:829px;letter-spacing:0.020px;">fillColor</span>
<span class="t" style="left:741.8px;top:691px;letter-spacing:0.240px;">typeOf</span>
<span class="t b" style="left:806.8px;top:691px;letter-spacing:-0.179px;">FigureConditionSelector</span>
<span class="t" style="left:741.8px;top:712px;letter-spacing:0.152px;">target</span>
<span class="t" style="left:806.8px;top:712px;letter-spacing:-0.075px;">ShowBorder</span>
<span class="t" style="left:741.8px;top:733px;letter-spacing:-0.004px;">selector</span>
<span class="t" style="left:806.8px;top:734px;letter-spacing:-0.325px;">State:State</span>
<div class="u" style="left:807px;top:749px;width:54px"></div>
<div class="u" style="left:806px;top:748px;width:1px"></div>
<div class="u" style="left:861px;top:748px;width:1px"></div>
<span class="t" style="left:865.5px;top:734px;letter-spacing:-0.051px;color:#0000ff;">intersect</span>
<span class="t" style="left:912.8px;top:734px;letter-spacing:-0.194px;">State[2]:State</span>
<div class="u" style="left:913px;top:749px;width:69px"></div>
<div class="u" style="left:912px;top:748px;width:1px"></div>
<div class="u" style="left:982px;top:748px;width:1px"></div>
<div class="a" style="left:509px;top:681px;width:485px;height:82px;border:3px solid #ed1c24"></div>
</body></html>
